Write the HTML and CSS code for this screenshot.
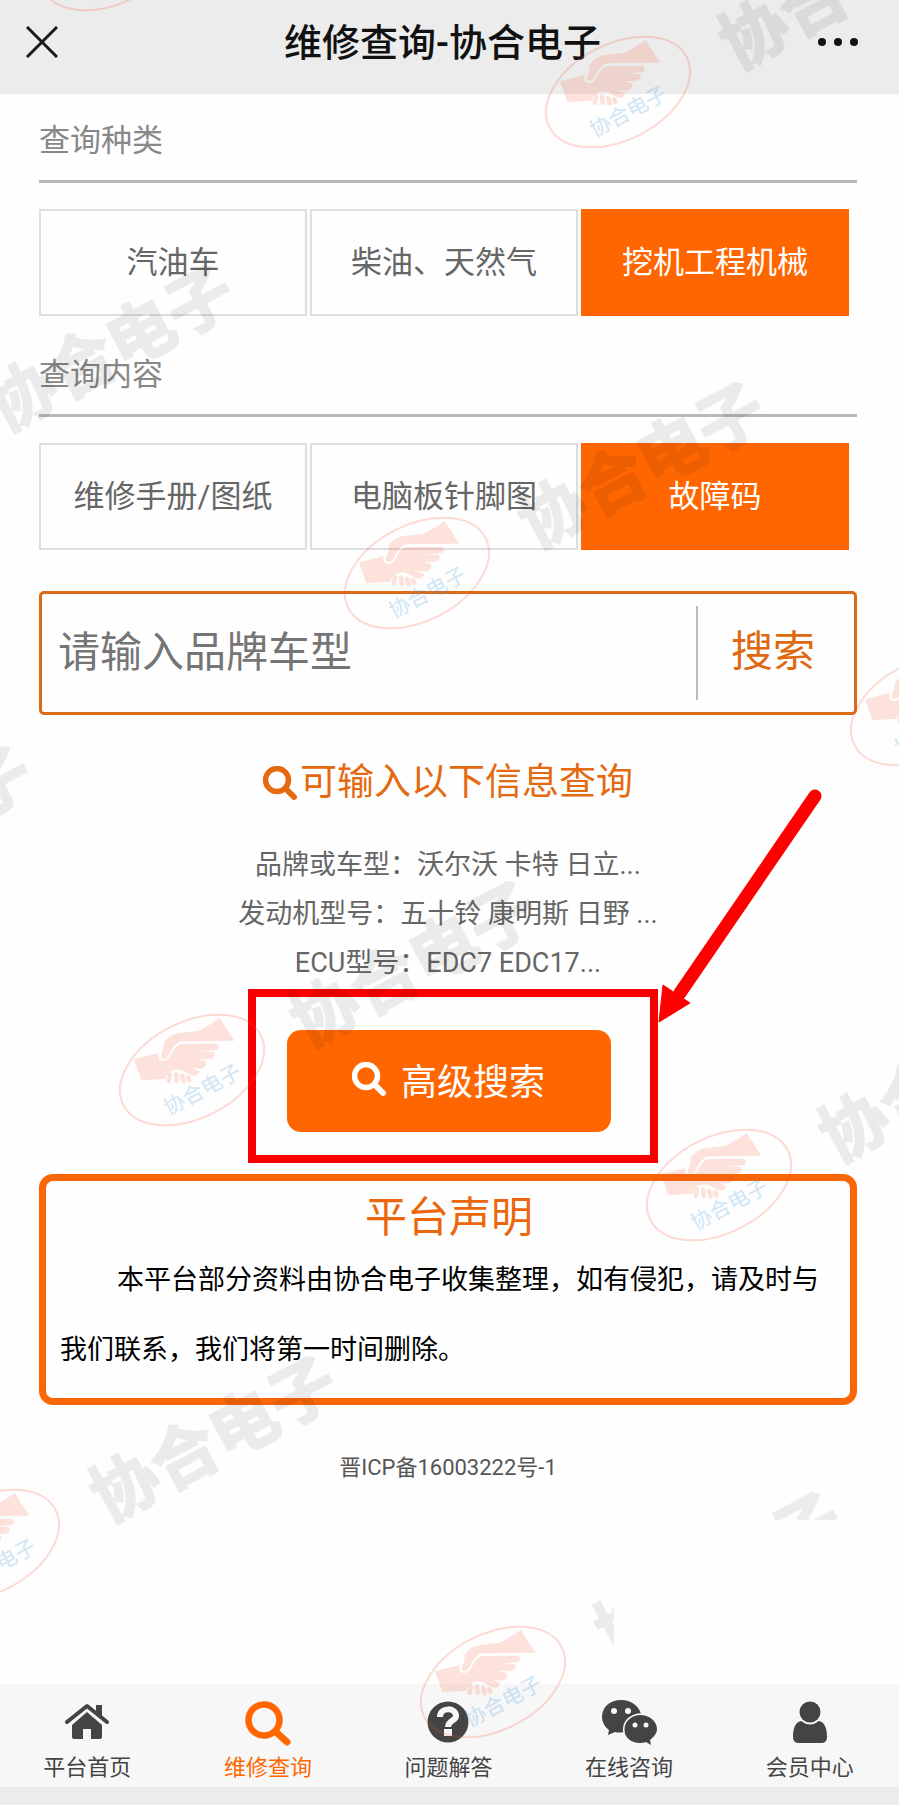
FILE: index.html
```html
<!DOCTYPE html>
<html lang="zh-CN">
<head>
    <meta charset="UTF-8">
    <meta name="viewport" content="width=device-width, initial-scale=1.0">
    <title>维修查询-协合电子</title>
    <link rel="stylesheet" href="styles.css">
</head>
<body>
    <header class="topbar">
        <button class="icon-btn" type="button" aria-label="关闭">
            <svg width="32" height="32" viewBox="0 0 32 32"><path d="M1 1 L31 31 M31 1 L1 31" stroke="#1a1a1a" stroke-width="3" fill="none"/></svg>
        </button>
        <h1>维修查询-协合电子</h1>
        <button class="icon-btn" type="button" aria-label="更多">
            <svg width="42" height="10" viewBox="0 0 42 10" fill="#111"><circle cx="5" cy="5" r="4"/><circle cx="21" cy="5" r="4"/><circle cx="37" cy="5" r="4"/></svg>
        </button>
    </header>

    <main class="content">
        <section class="filter">
            <h2>查询种类</h2>
            <div class="options">
                <button type="button">汽油车</button>
                <button type="button">柴油、天然气</button>
                <button type="button" class="active">挖机工程机械</button>
            </div>
        </section>

        <section class="filter">
            <h2>查询内容</h2>
            <div class="options">
                <button type="button">维修手册/图纸</button>
                <button type="button">电脑板针脚图</button>
                <button type="button" class="active">故障码</button>
            </div>
        </section>

        <form class="search">
            <input type="text" placeholder="请输入品牌车型" aria-label="请输入品牌车型">
            <button type="button">搜索</button>
        </form>

        <section class="tips">
            <h3>
                <svg width="35" height="35" viewBox="0 0 35 35" fill="none" stroke="currentColor"><circle cx="14" cy="14" r="11.500" stroke-width="5.500"/><path d="M23 23 L31 31" stroke-width="6" stroke-linecap="round"/></svg>
                可输入以下信息查询
            </h3>
            <p>品牌或车型：沃尔沃 卡特 日立...</p>
            <p>发动机型号：五十铃 康明斯 日野 ...</p>
            <p>ECU型号：EDC7 EDC17...</p>
        </section>

        <div class="highlight">
            <button type="button" class="advanced">
                <svg width="35" height="35" viewBox="0 0 35 35" fill="none" stroke="currentColor"><circle cx="14" cy="14" r="11.500" stroke-width="5.500"/><path d="M23 23 L31 31" stroke-width="6" stroke-linecap="round"/></svg>
                高级搜索
            </button>
            <svg class="arrow" width="166" height="236" viewBox="0 0 166 236"><path d="M157 9 L22 206" stroke="#fe0000" stroke-width="13" stroke-linecap="round"/><path d="M1 235 L5 198 L32 216 Z" fill="#fe0000" stroke="#fe0000"/></svg>
        </div>

        <section class="notice">
            <h3>平台声明</h3>
            <p>本平台部分资料由协合电子收集整理，如有侵犯，请及时与我们联系，我们将第一时间删除。</p>
        </section>

        <p class="icp">晋ICP备16003222号-1</p>
    </main>

    <nav class="tabbar">
        <a href="#">
            <svg width="44" height="46" viewBox="0 0 44 46"><path d="M7 25 L22 12 L37 25 V37 Q37 39 35 39 H26 V29 H18 V39 H9 Q7 39 7 37 Z" fill="currentColor"/><path d="M2 23 L22 7 L42 23" fill="none" stroke="#f7f7f7" stroke-width="7"/><path d="M2 22 L22 6 L42 22" fill="none" stroke="currentColor" stroke-width="4" stroke-linecap="round" stroke-linejoin="round"/><path d="M31 5 H37 V18 L31 13 Z" fill="currentColor"/></svg>
            平台首页
        </a>
        <a href="#" class="active">
            <svg width="46" height="46" viewBox="0 0 46 46" fill="none" stroke="currentColor"><circle cx="19" cy="20" r="15.500" stroke-width="6.500"/><path d="M31 32 L42 42" stroke-width="7" stroke-linecap="round"/></svg>
            维修查询
        </a>
        <a href="#">
            <svg width="42" height="46" viewBox="0 0 42 46"><circle cx="21" cy="22" r="20.500" fill="currentColor"/><path d="M13 17 C13 7 29 7 29 16 C29 21 21 20 21 27" fill="none" stroke="#f7f7f7" stroke-width="6"/><rect x="17" y="29" width="8" height="7" fill="#f7f7f7"/></svg>
            问题解答
        </a>
        <a href="#">
            <svg width="56" height="46" viewBox="0 0 56 46"><path d="M20 0 C9 0 1 7 1 17 C1 22 4 27 8 30 L7 35 L14 32 Q18 33 23 32 C22 22 29 14 40 14 C38 6 30 0 20 0 Z M39 15 C30 15 23 21 23 29 C23 37 30 43 39 43 Q43 43 45 42 L50 45 L49 40 C53 37 56 33 56 29 C56 21 48 15 39 15 Z" fill="currentColor"/><path d="M23 33 C21 22 29 14 41 14" fill="none" stroke="#f7f7f7" stroke-width="1.500"/><g fill="#f7f7f7"><circle cx="13" cy="11" r="3"/><circle cx="27" cy="11" r="3"/><circle cx="34" cy="25" r="2.500"/><circle cx="45" cy="25" r="2.500"/></g></svg>
            在线咨询
        </a>
        <a href="#">
            <svg width="36" height="46" viewBox="0 0 36 46" fill="currentColor"><circle cx="18" cy="12" r="10.500"/><path d="M9 21 Q18 28 27 21 C33 22 35 29 35 37 Q35 43 29 43 H7 Q1 43 1 37 C1 29 3 22 9 21 Z"/></svg>
            会员中心
        </a>
    </nav>

    <!-- watermark layer over the whole page -->
    <svg class="watermark" aria-hidden="true">
        <defs>
            <clipPath id="cut"><path d="M500 1400 H899 V1520 H614 V1700 H500 Z"/></clipPath>
            <g id="stamp">
                <ellipse rx="77" ry="48" transform="rotate(-27)" fill="none" stroke="#f05028" stroke-opacity=".2" stroke-width="2"/>
                <g transform="scale(.3333) translate(-264 -216)">
                    <g fill="#f05028" fill-opacity=".16">
                        <path d="M347 60 L391 128 L232 130 C214 134 205 150 195 170 C188 184 174 186 171 179 C168 168 183 152 179 134 Q196 112 220 106 L285 98 Q320 80 347 60 Z"/>
                        <path d="M90 184 L164 165 C158 190 182 198 197 178 C207 158 215 141 235 138 L338 137 C349 141 346 155 335 157 L288 160 L328 162 C337 168 331 180 320 182 L283 184 L304 188 C312 198 302 210 290 212 L264 210 L286 220 C284 232 270 236 262 232 L236 218 C218 210 192 216 184 242 L112 247 Z"/>
                    </g>
                    <path d="M198 230 L194 248 M216 230 L218 248 M234 234 L239 250 M252 238 L256 246" stroke="#f05028" stroke-opacity=".16" stroke-width="14" stroke-linecap="round"/>
                </g>
                <text class="stamp-name" transform="translate(10 19) rotate(-28)" text-anchor="middle" dy="8">协合电子</text>
            </g>
            <text id="mark" class="mark" transform="rotate(-28)" text-anchor="middle" dy="28">协合电子</text>
        </defs>
        <use href="#mark" transform="translate(841 -17)"/>
        <use href="#mark" transform="translate(109 345)"/>
        <use href="#mark" transform="translate(640 462)"/>
        <use href="#mark" transform="translate(-93 826)"/>
        <use href="#mark" transform="translate(412 961)"/>
        <use href="#mark" transform="translate(941 1076)"/>
        <use href="#mark" transform="translate(212 1436)"/>
        <g clip-path="url(#cut)"><use href="#mark" transform="translate(717 1572)"/></g>
        <use href="#stamp" transform="translate(112 -45)"/>
        <use href="#stamp" transform="translate(618 92)"/>
        <use href="#stamp" transform="translate(417 573)"/>
        <use href="#stamp" transform="translate(923 710)"/>
        <use href="#stamp" transform="translate(192 1070)"/>
        <use href="#stamp" transform="translate(719 1185)"/>
        <use href="#stamp" transform="translate(-13 1545)"/>
        <use href="#stamp" transform="translate(493 1682)"/>
    </svg>
</body>
</html>
```
FILE: styles.css
```css
* {
    box-sizing: border-box;
}

body {
    margin: 0;
    min-height: 100vh;
    display: flex;
    flex-direction: column;
    position: relative;
    overflow-x: hidden;
    background-color: #fefefe;
    font-family: Roboto, "Noto Sans CJK SC", sans-serif;
    color: #666;
}

h1, h2, h3, p {
    margin: 0;
    font-weight: normal;
}

button {
    font-family: inherit;
    cursor: pointer;
}

.topbar {
    display: flex;
    align-items: center;
    justify-content: space-between;
    height: 94px;
    padding: 0 40px 11px 26px;
    background-color: #ececec;
}

.topbar h1 {
    margin-left: 10px;
    padding-top: 2px;
    font-size: 38px;
    line-height: 48px;
    font-weight: 500;
    color: #111;
}

.icon-btn {
    display: flex;
    padding: 0;
    border: none;
    background: none;
}

.content {
    flex: 1;
    padding: 20px 42px 0 39px;
}

.filter {
    margin-bottom: 32px;
}

.filter h2 {
    padding-bottom: 12px;
    border-bottom: 3px solid #b9b9b9;
    font-size: 31px;
    line-height: 54px;
    color: #888;
}

.options {
    display: grid;
    grid-template-columns: repeat(3, 1fr);
    gap: 3px;
    margin: 26px 8px 0 0;
}

.options button {
    height: 107px;
    padding: 0 0 7px;
    border: 2px solid #dedede;
    background-color: transparent;
    font-size: 31px;
    color: #666;
}

.options .active {
    border-color: #ff6600;
    background-color: #ff6600;
    color: #fff;
}

.search {
    display: flex;
    align-items: center;
    height: 124px;
    margin-top: 41px;
    border: 3px solid #dc6b18;
    border-radius: 5px;
}

.search input {
    flex: 1;
    min-width: 0;
    height: 94px;
    padding: 0 16px 2px;
    border: none;
    outline: none;
    background: none;
    font-family: inherit;
    font-size: 42px;
}

.search input::placeholder {
    color: #757575;
}

.search button {
    width: 158px;
    height: 94px;
    padding: 0 6px 12px 0;
    border: none;
    border-left: 2px solid #bbb;
    background: none;
    font-size: 42px;
    color: #e0680f;
}

.tips {
    padding: 40px 0 0;
    text-align: center;
}

.tips h3 {
    display: flex;
    align-items: center;
    justify-content: center;
    gap: 2px;
    margin-bottom: 30px;
    font-size: 37px;
    line-height: 56px;
    color: #e5690f;
}

.tips p {
    font-size: 27px;
    line-height: 49px;
}

.highlight {
    position: relative;
    width: 410px;
    height: 174px;
    margin: 1px auto 11px;
    padding: 10px 9px 0 0;
    left: 5px;
    border: 8px solid #f90000;
    display: flex;
    align-items: center;
    justify-content: center;
}

.arrow {
    position: absolute;
    left: 402px;
    top: -210px;
}

.advanced {
    display: flex;
    align-items: center;
    justify-content: center;
    gap: 14px;
    width: 324px;
    height: 102px;
    padding: 0 0 4px;
    border: none;
    border-radius: 14px;
    background-color: #ff6600;
    font-size: 36px;
    color: #fff;
}

.notice {
    padding: 10px 12px 13px 14px;
    border: 7px solid #f96603;
    border-radius: 14px;
}

.notice h3 {
    text-align: center;
    font-size: 42px;
    line-height: 54px;
    color: #ec670c;
}

.notice p {
    text-indent: 57px;
    font-size: 27px;
    line-height: 70px;
    color: #000;
}

.icp {
    margin: 46px 0;
    text-align: center;
    font-size: 22px;
    line-height: 34px;
    color: #555;
}

.tabbar {
    display: grid;
    grid-template-columns: repeat(5, 1fr);
    margin-right: -4px;
    border-bottom: 18px solid #ececec;
    background-color: #f7f7f7;
}

.tabbar a {
    display: flex;
    flex-direction: column;
    align-items: center;
    gap: 5px;
    padding: 16px 6px 2px 0;
    font-size: 22px;
    line-height: 34px;
    color: #444;
    text-decoration: none;
}

.tabbar .active {
    color: #ff6600;
}

.watermark {
    position: absolute;
    top: 0;
    left: 0;
    width: 100%;
    height: 100%;
    overflow: hidden;
    pointer-events: none;
}

.mark {
    font-family: "Noto Sans CJK SC", sans-serif;
    font-size: 67px;
    font-weight: bold;
    fill: #000;
    stroke: #000;
    stroke-width: 2px;
    opacity: .07;
}

.stamp-name {
    font-family: "Noto Sans CJK SC", sans-serif;
    font-size: 21px;
    font-weight: 500;
    fill: #3a95d8;
    fill-opacity: .22;
}
```
